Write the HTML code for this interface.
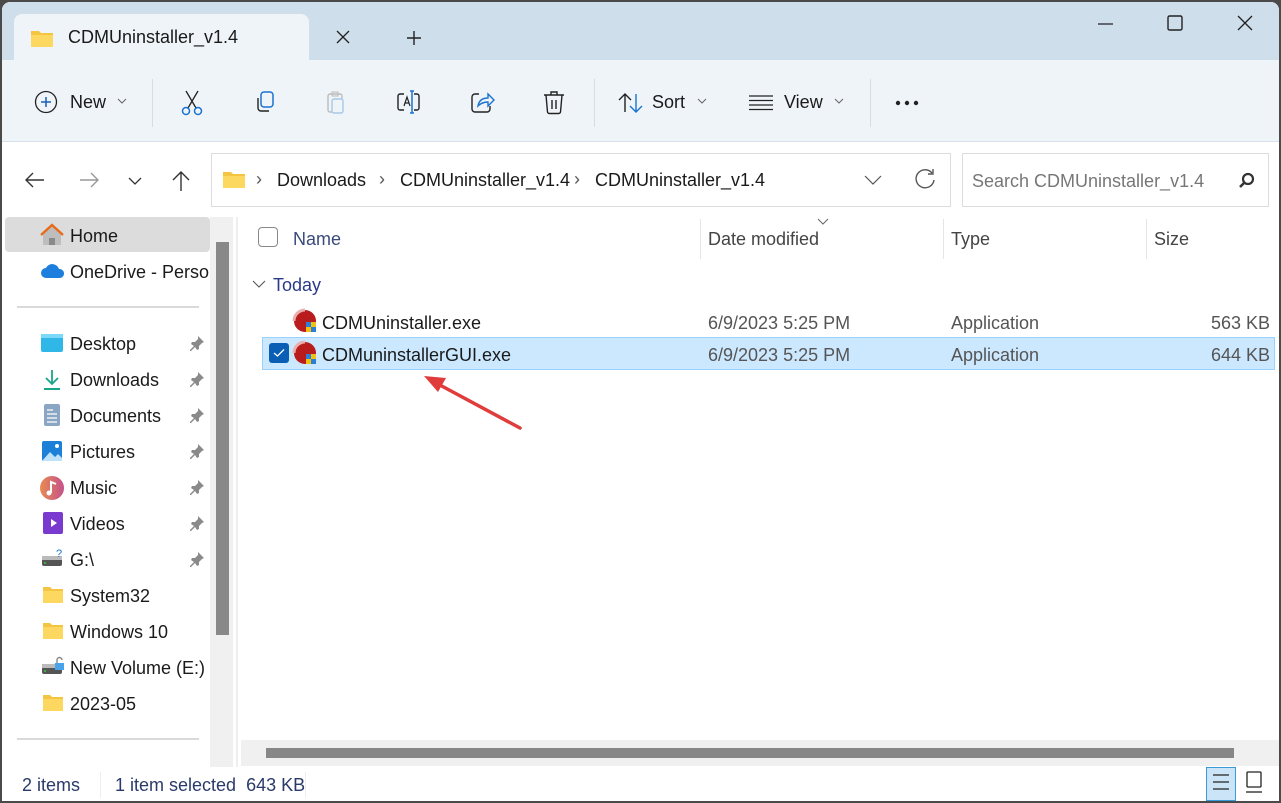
<!DOCTYPE html>
<html><head><meta charset="utf-8"><style>
*{margin:0;padding:0;box-sizing:border-box}
body{width:1281px;height:803px;background:#4a4a4a;font-family:"Liberation Sans",sans-serif;font-size:18px;color:#1a1a1a;overflow:hidden;position:relative}
.win{position:absolute;left:2px;top:2px;width:1277px;height:799px;background:#fff;border-radius:8px 8px 0 0;overflow:hidden}
.a{position:absolute;white-space:nowrap}
svg{position:absolute;overflow:visible}
</style></head><body><div class="win">
<!-- title bar -->
<div class="a" style="left:0;top:0;width:1277px;height:58px;background:#cfdeeb"></div>
<div class="a" style="left:12px;top:12px;width:295px;height:48px;background:#eff4f9;border-radius:8px 8px 0 0"></div>
<svg style="left:28px;top:26px" width="24" height="20"><path d="M1 3h8l2 2h12v14H1z" fill="#f4c542"/><path d="M1 7h22v12H1z" fill="#fcd860"/></svg>
<div class="a" style="left:66px;top:25px;font-size:18px">CDMUninstaller_v1.4</div>
<svg style="left:334px;top:28px" width="14" height="14"><path d="M1 1L13 13M13 1L1 13" stroke="#222" stroke-width="1.3"/></svg>
<svg style="left:404px;top:28px" width="16" height="16"><path d="M8 1V15M1 8H15" stroke="#222" stroke-width="1.4"/></svg>
<svg style="left:1096px;top:20px" width="16" height="4"><path d="M0 2H15" stroke="#222" stroke-width="1.2"/></svg>
<svg style="left:1165px;top:13px" width="16" height="16"><rect x="1" y="1" width="14" height="14" rx="1.5" fill="none" stroke="#222" stroke-width="1.4"/></svg>
<svg style="left:1235px;top:13px" width="16" height="16"><path d="M1 1L15 15M15 1L1 15" stroke="#222" stroke-width="1.3"/></svg>
<!-- toolbar -->
<div class="a" style="left:0;top:58px;width:1277px;height:82px;background:#eff4f9;border-bottom:1px solid #d6e0ea"></div>
<svg style="left:32px;top:88px" width="24" height="24"><circle cx="12" cy="12" r="10.5" fill="none" stroke="#222" stroke-width="1.3"/><path d="M12 7V17M7 12H17" stroke="#1a5fb4" stroke-width="1.5"/></svg>
<div class="a" style="left:68px;top:90px">New</div>
<svg style="left:115px;top:96px" width="10" height="6"><path d="M1 1L5 5L9 1" fill="none" stroke="#666"/></svg>
<div class="a" style="left:150px;top:77px;width:1px;height:48px;background:#d8dde3"></div>
<svg style="left:178px;top:88px" width="24" height="26"><path d="M6 1L16 18M18 1L8 18" stroke="#222" stroke-width="1.3"/><circle cx="6" cy="21" r="3.5" fill="none" stroke="#1a73d0" stroke-width="1.5"/><circle cx="18" cy="21" r="3.5" fill="none" stroke="#1a73d0" stroke-width="1.5"/></svg>
<svg style="left:252px;top:89px" width="24" height="24"><rect x="7" y="1" width="12" height="15" rx="3" fill="none" stroke="#1a73d0" stroke-width="1.5"/><path d="M4 7v10a3 3 0 0 0 3 3h8" fill="none" stroke="#222" stroke-width="1.4"/></svg>
<svg style="left:324px;top:88px" width="24" height="26"><rect x="2" y="4" width="14" height="18" rx="2" fill="none" stroke="#bbb" stroke-width="1.4"/><rect x="6" y="9" width="11" height="14" rx="2" fill="#eff4f9" stroke="#a8c8e8" stroke-width="1.4"/><rect x="6" y="2" width="6" height="4" fill="none" stroke="#bbb"/></svg>
<svg style="left:394px;top:88px" width="28" height="26"><path d="M8 4H4a2 2 0 0 0-2 2v12a2 2 0 0 0 2 2h4M18 4h3a2 2 0 0 1 2 2v12a2 2 0 0 1-2 2h-3" fill="none" stroke="#222" stroke-width="1.4"/><path d="M8 16L11 7L14 16M9 13h4" fill="none" stroke="#222" stroke-width="1.2"/><path d="M16 1V23M14 1h4M14 23h4" stroke="#1a73d0" stroke-width="1.5"/></svg>
<svg style="left:468px;top:88px" width="26" height="24"><path d="M9 4H5a3 3 0 0 0-3 3v12a3 3 0 0 0 3 3h12a3 3 0 0 0 3-3v-3" fill="none" stroke="#222" stroke-width="1.4"/><path d="M8 16c1-6 5-8 10-8V4l6 6-6 6v-4c-4 0-7 1-10 4z" fill="none" stroke="#1a73d0" stroke-width="1.4"/></svg>
<svg style="left:540px;top:88px" width="24" height="26"><path d="M2 5H22M9 5V2h6v3M4 5l1.5 17a2 2 0 0 0 2 1.5h9a2 2 0 0 0 2-1.5L20 5M10 10v9M14 10v9" fill="none" stroke="#222" stroke-width="1.4"/></svg>
<div class="a" style="left:592px;top:77px;width:1px;height:48px;background:#d8dde3"></div>
<svg style="left:616px;top:90px" width="26" height="22"><path d="M7 20V2M1 8L7 2L13 8" fill="none" stroke="#222" stroke-width="1.4"/><path d="M18 2V20M12 14L18 20L24 14" fill="none" stroke="#1a73d0" stroke-width="1.4"/></svg>
<div class="a" style="left:650px;top:90px">Sort</div>
<svg style="left:695px;top:96px" width="10" height="6"><path d="M1 1L5 5L9 1" fill="none" stroke="#666"/></svg>
<svg style="left:747px;top:93px" width="26" height="16"><path d="M0 1H24M0 5.5H24M0 10H24M0 14.5H24" stroke="#222" stroke-width="1.2"/></svg>
<div class="a" style="left:782px;top:90px">View</div>
<svg style="left:832px;top:96px" width="10" height="6"><path d="M1 1L5 5L9 1" fill="none" stroke="#666"/></svg>
<div class="a" style="left:868px;top:77px;width:1px;height:48px;background:#d8dde3"></div>
<svg style="left:893px;top:98px" width="26" height="6"><circle cx="3" cy="3" r="2.2" fill="#222"/><circle cx="12" cy="3" r="2.2" fill="#222"/><circle cx="21" cy="3" r="2.2" fill="#222"/></svg>
<!-- address bar -->
<svg style="left:23px;top:170px" width="20" height="16"><path d="M19 8H2M8 1L1 8L8 15" fill="none" stroke="#333" stroke-width="1.4"/></svg>
<svg style="left:77px;top:170px" width="20" height="16"><path d="M1 8H18M12 1L19 8L12 15" fill="none" stroke="#999" stroke-width="1.4"/></svg>
<svg style="left:126px;top:175px" width="14" height="8"><path d="M1 1L7 7L13 1" fill="none" stroke="#333" stroke-width="1.3"/></svg>
<svg style="left:170px;top:168px" width="18" height="22"><path d="M9 21V2M1 10L9 2L17 10" fill="none" stroke="#333" stroke-width="1.4"/></svg>
<div class="a" style="left:209px;top:151px;width:740px;height:54px;border:1px solid #dcdcdc"></div>
<svg style="left:220px;top:168px" width="24" height="20"><path d="M1 2h8l2 2h12v14H1z" fill="#f4c542"/><path d="M1 6h22v12H1z" fill="#fcd860"/></svg>
<div class="a" style="left:254px;top:167px;color:#555">›</div>
<div class="a" style="left:275px;top:168px">Downloads</div>
<div class="a" style="left:377px;top:167px;color:#555">›</div>
<div class="a" style="left:398px;top:168px">CDMUninstaller_v1.4</div>
<div class="a" style="left:572px;top:167px;color:#555">›</div>
<div class="a" style="left:593px;top:168px">CDMUninstaller_v1.4</div>
<svg style="left:862px;top:173px" width="18" height="10"><path d="M1 1L9 9L17 1" fill="none" stroke="#555" stroke-width="1.2"/></svg>
<svg style="left:912px;top:166px" width="22" height="22"><path d="M18 5A9 9 0 1 0 20 12" fill="none" stroke="#555" stroke-width="1.4"/><path d="M19 1V6H14" fill="none" stroke="#555" stroke-width="1.4"/></svg>
<div class="a" style="left:960px;top:151px;width:307px;height:54px;border:1px solid #dcdcdc"></div>
<div class="a" style="left:970px;top:169px;color:#777">Search CDMUninstaller_v1.4</div>
<svg style="left:1236px;top:170px" width="18" height="18"><circle cx="10" cy="7" r="5" fill="none" stroke="#333" stroke-width="2.2"/><path d="M6.5 10.5L2 15" stroke="#333" stroke-width="2.6"/></svg>
<!-- sidebar -->
<div class="a" style="left:3px;top:215px;width:205px;height:35px;background:#dcdcdc;border-radius:4px"></div>
<svg style="left:38px;top:221px" width="24" height="24"><path d="M3 11L12 3L21 11V22H3z" fill="#bdbdbd"/><path d="M1 12L12 2L23 12" fill="none" stroke="#e86a1a" stroke-width="2.4"/><rect x="9" y="15" width="6" height="7" fill="#8a8a8a"/></svg>
<div class="a" style="left:68px;top:224px">Home</div>
<svg style="left:38px;top:260px" width="26" height="18"><path d="M6 16a5 5 0 0 1 0-10a7 7 0 0 1 13 1a4.5 4.5 0 0 1 1 9z" fill="#1d7fdd"/></svg>
<div class="a" style="left:68px;top:260px;width:140px;overflow:hidden">OneDrive - Personal</div>
<div class="a" style="left:15px;top:304px;width:182px;height:2px;background:#dadada"></div>
<svg style="left:38px;top:331px" width="24" height="20"><rect x="1" y="1" width="22" height="18" rx="2" fill="#2fb7e8"/><rect x="1" y="1" width="22" height="4" fill="#7bd8f7"/></svg>
<div class="a" style="left:68px;top:332px">Desktop</div>
<svg style="left:40px;top:367px" width="20" height="22"><path d="M10 1V15M4 9L10 15L16 9" fill="none" stroke="#1aa58a" stroke-width="1.8"/><path d="M2 20H18" stroke="#1aa58a" stroke-width="2"/></svg>
<div class="a" style="left:68px;top:368px">Downloads</div>
<svg style="left:41px;top:401px" width="18" height="24"><rect x="1" y="1" width="16" height="22" rx="2" fill="#8ba6c4"/><path d="M4 7h6M4 11h10M4 15h10M4 19h10" stroke="#fff" stroke-width="1.3"/></svg>
<div class="a" style="left:68px;top:404px">Documents</div>
<svg style="left:39px;top:438px" width="22" height="22"><rect x="1" y="1" width="20" height="20" rx="2" fill="#1c7fd8"/><path d="M1 21L9 12L14 17L17 14L21 18V21z" fill="#bfe2fb"/><circle cx="16" cy="6" r="2" fill="#fff"/></svg>
<div class="a" style="left:68px;top:440px">Pictures</div>
<svg style="left:38px;top:474px" width="24" height="24"><defs><linearGradient id="mg" x1="0" x2="1"><stop offset="0" stop-color="#e88a52"/><stop offset="1" stop-color="#c4528a"/></linearGradient></defs><circle cx="12" cy="12" r="12" fill="url(#mg)"/><path d="M11 17V6l5 2" fill="none" stroke="#fff" stroke-width="2"/><circle cx="9" cy="17" r="2.5" fill="#fff"/></svg>
<div class="a" style="left:68px;top:476px">Music</div>
<svg style="left:40px;top:509px" width="22" height="24"><rect x="1" y="1" width="20" height="22" rx="2" fill="#7a3ad0"/><path d="M9 8L15 12L9 16z" fill="#fff"/></svg>
<div class="a" style="left:68px;top:512px">Videos</div>
<svg style="left:39px;top:546px" width="24" height="20"><rect x="1" y="9" width="20" height="9" rx="2" fill="#555"/><rect x="1" y="8" width="20" height="4" fill="#bbb"/><circle cx="4" cy="15" r="1" fill="#3c3"/><text x="15" y="9" font-size="11" fill="#1a73d0" font-family="Liberation Sans">?</text></svg>
<div class="a" style="left:68px;top:548px">G:\</div>
<svg style="left:40px;top:584px" width="22" height="18"><path d="M1 1h7l2 2h11v14H1z" fill="#f4c542"/><path d="M1 5h20v12H1z" fill="#fcd860"/></svg>
<div class="a" style="left:68px;top:584px">System32</div>
<svg style="left:40px;top:620px" width="22" height="18"><path d="M1 1h7l2 2h11v14H1z" fill="#f4c542"/><path d="M1 5h20v12H1z" fill="#fcd860"/></svg>
<div class="a" style="left:68px;top:620px">Windows 10</div>
<svg style="left:39px;top:654px" width="24" height="20"><rect x="1" y="9" width="20" height="9" rx="2" fill="#555"/><rect x="1" y="8" width="20" height="4" fill="#bbb"/><circle cx="4" cy="15" r="1" fill="#3c3"/><rect x="14" y="7" width="9" height="7" fill="#4aa3e8"/><path d="M16 7V4a2.5 2.5 0 0 1 5 0" fill="none" stroke="#888" stroke-width="1.4"/></svg>
<div class="a" style="left:68px;top:656px">New Volume (E:)</div>
<svg style="left:40px;top:692px" width="22" height="18"><path d="M1 1h7l2 2h11v14H1z" fill="#f4c542"/><path d="M1 5h20v12H1z" fill="#fcd860"/></svg>
<div class="a" style="left:68px;top:692px">2023-05</div>
<div class="a" style="left:15px;top:736px;width:182px;height:2px;background:#dadada"></div>
<!-- pins -->
<svg style="left:187px;top:333px" width="16" height="16"><path d="M9 1l6 6-2 1-3 3 0 3-2 1-2-3-4 4-1 0 0-1 4-4-3-2 1-2 3 0 3-3z" fill="#8a8a8a"/></svg>
<svg style="left:187px;top:369px" width="16" height="16"><path d="M9 1l6 6-2 1-3 3 0 3-2 1-2-3-4 4-1 0 0-1 4-4-3-2 1-2 3 0 3-3z" fill="#8a8a8a"/></svg>
<svg style="left:187px;top:405px" width="16" height="16"><path d="M9 1l6 6-2 1-3 3 0 3-2 1-2-3-4 4-1 0 0-1 4-4-3-2 1-2 3 0 3-3z" fill="#8a8a8a"/></svg>
<svg style="left:187px;top:441px" width="16" height="16"><path d="M9 1l6 6-2 1-3 3 0 3-2 1-2-3-4 4-1 0 0-1 4-4-3-2 1-2 3 0 3-3z" fill="#8a8a8a"/></svg>
<svg style="left:187px;top:477px" width="16" height="16"><path d="M9 1l6 6-2 1-3 3 0 3-2 1-2-3-4 4-1 0 0-1 4-4-3-2 1-2 3 0 3-3z" fill="#8a8a8a"/></svg>
<svg style="left:187px;top:513px" width="16" height="16"><path d="M9 1l6 6-2 1-3 3 0 3-2 1-2-3-4 4-1 0 0-1 4-4-3-2 1-2 3 0 3-3z" fill="#8a8a8a"/></svg>
<svg style="left:187px;top:549px" width="16" height="16"><path d="M9 1l6 6-2 1-3 3 0 3-2 1-2-3-4 4-1 0 0-1 4-4-3-2 1-2 3 0 3-3z" fill="#8a8a8a"/></svg>
<!-- sidebar scrollbar -->
<div class="a" style="left:208px;top:215px;width:23px;height:550px;background:#f0f0f0"></div>
<div class="a" style="left:214px;top:240px;width:13px;height:393px;background:#888"></div>
<div class="a" style="left:234px;top:215px;width:2px;height:550px;background:#eee"></div>
<!-- file list -->
<div class="a" style="left:256px;top:225px;width:20px;height:20px;border:1px solid #888;border-radius:4px"></div>
<div class="a" style="left:291px;top:227px;color:#3a4a7a">Name</div>
<div class="a" style="left:698px;top:217px;width:1px;height:40px;background:#e5e5e5"></div>
<svg style="left:815px;top:216px" width="12" height="7"><path d="M1 1L6 6L11 1" fill="none" stroke="#666"/></svg>
<div class="a" style="left:706px;top:227px;color:#444">Date modified</div>
<div class="a" style="left:941px;top:217px;width:1px;height:40px;background:#e5e5e5"></div>
<div class="a" style="left:949px;top:227px;color:#444">Type</div>
<div class="a" style="left:1144px;top:217px;width:1px;height:40px;background:#e5e5e5"></div>
<div class="a" style="left:1152px;top:227px;color:#444">Size</div>
<svg style="left:250px;top:278px" width="14" height="8"><path d="M1 1L7 7L13 1" fill="none" stroke="#555" stroke-width="1.1"/></svg>
<div class="a" style="left:271px;top:273px;color:#2a3a8a">Today</div>
<div class="a" style="left:260px;top:335px;width:1013px;height:33px;background:#cce8ff;border:1px solid #99d1ff"></div>
<svg style="left:289px;top:307px" width="26" height="24"><circle cx="14" cy="12" r="11" fill="#b81c1c"/><path d="M3 12a11 11 0 0 1 11-11" fill="none" stroke="#e9b0b0" stroke-width="3"/><rect x="15" y="13" width="5" height="5" fill="#2a7fd8"/><rect x="20" y="13" width="5" height="5" fill="#f2c012"/><rect x="15" y="18" width="5" height="5" fill="#f2c012"/><rect x="20" y="18" width="5" height="5" fill="#2a7fd8"/></svg>
<div class="a" style="left:320px;top:311px">CDMUninstaller.exe</div>
<div class="a" style="left:706px;top:311px;color:#555">6/9/2023 5:25 PM</div>
<div class="a" style="left:949px;top:311px;color:#555">Application</div>
<div class="a" style="right:9px;top:311px;color:#555">563 KB</div>
<div class="a" style="left:267px;top:341px;width:20px;height:20px;background:#0a5fb4;border-radius:3px"></div>
<svg style="left:271px;top:346px" width="12" height="10"><path d="M1 5L4.5 8L11 1.5" fill="none" stroke="#fff" stroke-width="1.3"/></svg>
<svg style="left:289px;top:339px" width="26" height="24"><circle cx="14" cy="12" r="11" fill="#b81c1c"/><path d="M3 12a11 11 0 0 1 11-11" fill="none" stroke="#e9b0b0" stroke-width="3"/><rect x="15" y="13" width="5" height="5" fill="#2a7fd8"/><rect x="20" y="13" width="5" height="5" fill="#f2c012"/><rect x="15" y="18" width="5" height="5" fill="#f2c012"/><rect x="20" y="18" width="5" height="5" fill="#2a7fd8"/></svg>
<div class="a" style="left:320px;top:343px">CDMuninstallerGUI.exe</div>
<div class="a" style="left:706px;top:343px;color:#555">6/9/2023 5:25 PM</div>
<div class="a" style="left:949px;top:343px;color:#555">Application</div>
<div class="a" style="right:9px;top:343px;color:#555">644 KB</div>
<!-- arrow -->
<svg style="left:0;top:0" width="1281" height="803"><path d="M518 426L436 382" stroke="#e03c3c" stroke-width="3.5" stroke-linecap="round"/><path d="M422 374L444 376L436 390z" fill="#e03c3c"/></svg>
<!-- horizontal scrollbar -->
<div class="a" style="left:239px;top:738px;width:1038px;height:26px;background:#f0f0f0"></div>
<div class="a" style="left:264px;top:746px;width:968px;height:10px;background:#878787"></div>
<!-- status bar -->
<div class="a" style="left:20px;top:773px;color:#2a3a6a">2 items</div>
<div class="a" style="left:98px;top:770px;width:1px;height:26px;background:#eee"></div>
<div class="a" style="left:113px;top:773px;color:#2a3a6a">1 item selected&nbsp; 643 KB</div>
<div class="a" style="left:303px;top:770px;width:1px;height:26px;background:#eee"></div>
<div class="a" style="left:1204px;top:765px;width:30px;height:34px;background:#cce4f7;border:1px solid #3a9ad8"></div>
<svg style="left:1210px;top:771px" width="18" height="20"><path d="M1 2H17M1 9H17M1 16H17" stroke="#222" stroke-width="1.3"/></svg>
<svg style="left:1243px;top:769px" width="18" height="24"><rect x="2" y="1" width="14" height="15" rx="1" fill="none" stroke="#222" stroke-width="1.3"/><path d="M1 21H17" stroke="#222" stroke-width="1.3"/></svg>
</div></body></html>
